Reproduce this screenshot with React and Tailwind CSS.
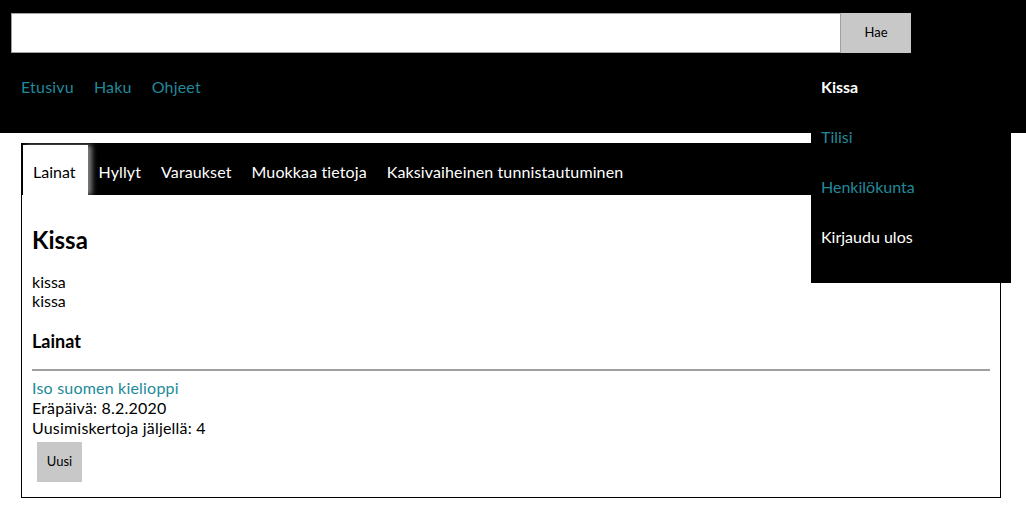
import React from "react";

const navLinks = ["Etusivu", "Haku", "Ohjeet"];
const tabs = ["Hyllyt", "Varaukset", "Muokkaa tietoja", "Kaksivaiheinen tunnistautuminen"];

const App = () => {
	return (
		<div className="relative min-h-[519px] bg-white text-black font-['Lato','Liberation_Sans',sans-serif] text-[16px]">
			{/* header */}
			<div className="h-[133px] bg-black pt-[13px]">
				<div className="flex ml-[11px]">
					<input
						className="w-[830px] h-[40px] bg-white border border-[#a0a0a0] outline-none px-2"
						type="text"
					/>
					<button className="w-[70px] h-[40px] bg-[#c8c8c8] text-[13px] text-black">Hae</button>
				</div>
				<div className="flex gap-[20px] ml-[21px] mt-[24px] text-[#22899a] leading-[20px] tracking-[0.2px]">
					{navLinks.map((l) => (
						<a key={l} href="#">
							{l}
						</a>
					))}
				</div>
			</div>

			{/* user menu */}
			<div className="absolute left-[811px] top-[62px] w-[200px] bg-black pb-[21px] leading-[20px]">
				<div className="h-[50px] pl-[10px] pt-[15px] text-white font-bold">Kissa</div>
				<div className="h-[50px] pl-[10px] pt-[15px] text-[#22899a]">Tilisi</div>
				<div className="h-[50px] pl-[10px] pt-[15px] text-[#22899a]">Henkilökunta</div>
				<div className="h-[50px] pl-[10px] pt-[15px] text-white">Kirjaudu ulos</div>
			</div>

			{/* main box */}
			<div className="mx-[21px] mt-[10px] w-[980px] h-[355px] border border-black">
				<div className="flex items-stretch h-[51px] bg-black pt-[1px]">
					<div className="bg-white pl-[10px] pr-[12px] pt-[15px] border-l border-black shadow-[4px_0_5px_rgba(255,255,255,0.5)]">
						Lainat
					</div>
					<div className="flex gap-[20px] pl-[11px] pt-[15px] text-white tracking-[0.12px]">
						{tabs.map((t) => (
							<span key={t}>{t}</span>
						))}
					</div>
				</div>
				<div className="px-[10px]">
					<h2 className="mt-[30px] text-[24px] font-bold leading-[30px]">Kissa</h2>
					<div className="mt-[17px] leading-[19px]">
						<div>kissa</div>
						<div>kissa</div>
					</div>
					<h3 className="mt-[19px] text-[18px] font-bold leading-[24px]">Lainat</h3>
					<hr className="mt-[16px] border-0 h-[2px] bg-[#a0a0a0]" />
					<div className="mt-[7px] leading-[20px] tracking-[0.2px]">
						<a href="#" className="text-[#22899a]">
							Iso suomen kielioppi
						</a>
						<div>Eräpäivä: 8.2.2020</div>
						<div>Uusimiskertoja jäljellä: 4</div>
					</div>
					<button className="mt-[4px] ml-[5px] w-[45px] h-[40px] bg-[#c8c8c8] text-[13px]">Uusi</button>
				</div>
			</div>
		</div>
	);
};

export default App;
